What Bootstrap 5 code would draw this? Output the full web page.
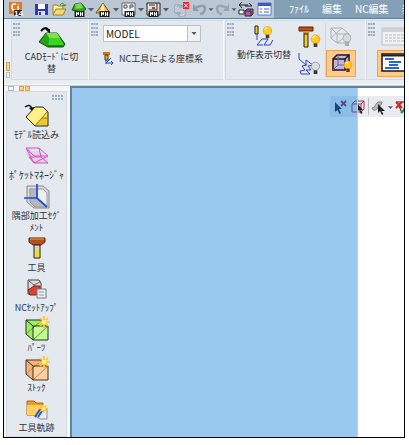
<!DOCTYPE html>
<html lang="ja">
<head>
<meta charset="utf-8">
<meta name="viewport" content="width=device-width, initial-scale=1">
<title>CAM</title>
<link href="https://cdn.jsdelivr.net/npm/bootstrap@5.3.0/dist/css/bootstrap.min.css" rel="stylesheet">
<style>
body{font:9px/12px "Noto Sans CJK JP",sans-serif;color:#303238;background:#fff}
.shell{padding:0 4px 7px 3px}
.app{border:1px solid #000;border-top:0;background:#e9eef2}
button{background:none;border:0;padding:0;color:inherit;font:inherit}
svg{display:block;overflow:visible;flex:none}
.titlebar{height:19px;background:#84a0b7;border-bottom:1px solid #5f7f97}
.quick{background:#bbc7d5;padding-left:4px;width:270px;flex:none}
.quick svg{width:15px;height:16px}
.quick .drop svg{width:10px}
.tail .drop svg{width:8px}
.logo{margin-right:11px}
.gap-l{margin-left:3px}
.gap-m{margin-left:4px}
.menus{gap:13px;padding-left:15px;font-size:10px;overflow:hidden;flex:1 1 0;min-width:0}
.menus a{color:#fff;text-decoration:none;white-space:nowrap}
.ribbon{height:66px;padding:1px 0 4px;border-bottom:1px solid #f8fafb}
.tabs-v{width:7px;padding:0 0 2px 2px;flex:none;gap:1px}
.tabs-v i,.tabs-h i{border:1px solid #a9b9c5;background:#fff;width:4px;height:6px}
.tabs-v i.on,.tabs-h i.on{background:#ffcf80;border-color:#cfa260}
.tabs-v i.on{height:9px}
.group{background:#e3e9ef;border:1px solid #d3dae1;border-right-color:#f9fafb;padding:2px 1px;flex:none}
.g-mode{width:78px}.g-coord{width:135px;margin-right:1px}.g-view{width:141px}.g-list{width:60px}
.dots{width:7px;height:14px;flex:none}
.mode-btn{padding:1px 4px 0 0}
.coord{padding:2px 0 0 5px;gap:10px}
.combo{width:98px;height:17px}
.combo select{appearance:none;width:100%;height:100%;font-size:10px;line-height:15px;border:1px solid #b8c0c8;border-radius:0;background:#fff;padding:0 2px;color:#222}
.combo svg{position:absolute;right:0;top:0;pointer-events:none}
.coord-btn{gap:5px;white-space:nowrap}
.switch{width:56px;padding-top:3px;gap:2px;white-space:nowrap}
.next{margin-left:2px}
.tile{width:30px;height:29px}
.tile.active{background:#ffcb8b;border:1px solid #e9a55c}
.col-sep{border-left:1px solid #cbd3db;margin-left:1px}
.work{border-top:1px solid #c7d0d8}
.side{width:66px;flex:none;background:#f4f6f8}
.tabs-h{gap:1px;padding-left:4px}
.tabs-h i{width:6px;height:5px}.tabs-h i.on{width:5px}
.panel{background:#e3e9ef;border:1px solid #d2dae1;margin:0 3px 0 2px;padding-top:3px}
.dots-h{margin:0 2px 4px auto}
.tools{gap:3px}
.tools button{width:100%;white-space:nowrap}
.tools svg{margin:0 auto;width:26px;height:25px}
.small-label{font-size:10px;margin:0 -2px}
.canvas{background:#fff;border-left:2px solid #648399;border-top:2px solid #648399;padding-top:8px}
.float-bar{background:#e8ecf0;width:74px;height:21px;border-radius:3px 0 0 3px;padding-left:3px;gap:3px;overflow:hidden}
.float-bar .rule{border-left:1px solid #b8bcc2;height:17px}
.selection{inset:0 46px 0 0;background:rgba(0,120,215,.4);border-right:1px solid #b0d4f2;pointer-events:none}
</style>
<script src="https://cdn.jsdelivr.net/npm/bootstrap@5.3.0/dist/js/bootstrap.bundle.min.js"></script>
</head>
<body>
<svg width="0" height="0" class="position-absolute" aria-hidden="true">
<defs>
<symbol id="caret" viewBox="0 0 10 16"><path d="M2 7h6L5 10.500z" fill="#555d68"/></symbol>
<symbol id="grip" viewBox="0 0 7 14"><path d="M0 1h7M0 5h7M0 9h7M0 12h7" stroke="#9aafc2" stroke-width="2" stroke-dasharray="2 .5"/></symbol>
<symbol id="bulb" viewBox="0 0 12 16"><circle cx="6" cy="5.500" r="4.700" fill="#ffc928" stroke="#ef9f12"/><path d="M3 4q1-2 3-2" stroke="#fff6ad" stroke-width="1.500" fill="none"/><path d="M4 10h4v4H4z" fill="#4a3a2a"/></symbol>
<symbol id="bulboff" viewBox="0 0 12 16"><circle cx="6" cy="5.500" r="4.500" fill="#dcdddd" stroke="#96999b"/><path d="M4 10h4v4H4z" fill="#333"/></symbol>
<symbol id="star" viewBox="0 0 12 12"><path d="M6 0v12M0 6h12M2 2l8 8M10 2l-8 8" stroke="#ffc42e" stroke-width="1.700"/><circle cx="6" cy="6" r="2.200" fill="#fff3a0"/></symbol>
<symbol id="nc" viewBox="0 0 10 6"><path d="M0 0h10v6H0z" fill="#222"/><path d="M2 5V1l2 3V1M6 5V1M8 1v4M6 3h2" stroke="#fff" fill="none"/></symbol>
</defs>
</svg>
<div class="shell vh-100">
<div class="app h-100 d-flex flex-column overflow-hidden">
<header class="titlebar d-flex">
<div class="quick d-flex align-items-center">
<span class="logo"><svg viewBox="0 0 15 16"><path d="M1 1h13v12H1z" fill="#e87722"/><path d="M8 3Q4 2 4 6q0 4 4 3M10 5v4M10 3v1" stroke="#fff" stroke-width="1.600" fill="none"/><path d="M6 9h8v6H6z" fill="#351d14"/><text x="6" y="15" font-size="8" font-weight="700" fill="#fff" font-family="Liberation Sans,sans-serif">14</text></svg></span>
<button aria-label="保存"><svg viewBox="0 0 15 16"><path d="M1 3h13v11H1z" fill="#3038bd"/><path d="M4 3h7v5H4z" fill="#fff"/><path d="M4 10h7v4H4z" fill="#dfe4f5"/><path d="M5 11h2v3H5z" fill="#333a9a"/></svg></button>
<button class="gap-l" aria-label="開く"><svg viewBox="0 0 15 16"><path d="M1 13V4h4l1 1h5v3" fill="#fff0a0" stroke="#99802e"/><path d="M1 14L4 8h10l-3 6z" fill="#f5d873" stroke="#99802e"/><path d="M8 4q3-4 5 1l1-2m-1 2l-3-1" stroke="#3a9c3a" fill="none"/></svg></button>
<button class="gap-m" aria-label="モデル"><svg viewBox="0 0 15 16"><path d="M1 9l3-6 6-1 5 6-4 3z" fill="#37a722" stroke="#1d5412"/><path d="M4 3l6-1 2 5-7 1z" fill="#78d956"/><use href="#nc" x="3" y="10" width="11" height="6"/></svg></button><button class="drop" aria-label="モデルの一覧"><svg><use href="#caret"/></svg></button>
<button aria-label="ワーク"><svg viewBox="0 0 15 16"><path d="M7 2l7 10H0z" fill="#f6b53c" stroke="#765117"/><path d="M7 2l2 9H4z" fill="#fff6c8"/><use href="#nc" x="3" y="10" width="11" height="6"/></svg></button><button class="drop" aria-label="ワークの一覧"><svg><use href="#caret"/></svg></button>
<button aria-label="ポスト"><svg viewBox="0 0 15 16"><path d="M1 2h13v12H1z" fill="#f4f5f6" stroke="#666"/><path d="M3 4h3v3H3zM9 8V4h3v2H9" fill="none" stroke="#555"/><use href="#nc" x="3" y="10" width="11" height="6"/></svg></button><button class="drop" aria-label="ポストの一覧"><svg><use href="#caret"/></svg></button>
<button aria-label="機械"><svg viewBox="0 0 15 16"><path d="M1 2h13v12H1z" fill="#e4e2df" stroke="#222"/><path d="M11 2v7H3M3 4h6" fill="none" stroke="#333"/><path d="M6 6h3v2H6z" fill="#c8342c"/><use href="#nc" x="2" y="10" width="11" height="6"/></svg></button><button class="drop" aria-label="機械の一覧"><svg><use href="#caret"/></svg></button>
<button class="gap-l" aria-label="削除"><svg viewBox="0 0 15 16"><path d="M1 4h6v8H1zM3 5h6v8H3zM5 6h6v9H5z" fill="#f5f7fa" stroke="#8b9cb1"/><path d="M9 1h6v7H9z" fill="#e7252d"/><path d="M10 2.500l4 4m0-4l-4 4" stroke="#fff"/></svg></button>
<div class="tail d-flex gap-l"><button aria-label="元に戻す"><svg viewBox="0 0 15 16"><path d="M3 7q10-5 10 1 0 4-5 5" fill="none" stroke="#909dac" stroke-width="2.500"/><path d="M1 3v7h6z" fill="#909dac"/></svg></button><button class="drop" aria-label="元に戻す履歴"><svg><use href="#caret" width="8" height="16"/></svg></button><button aria-label="やり直し"><svg viewBox="0 0 15 16"><path d="M12 7Q2 2 2 8q0 4 5 5" fill="none" stroke="#98a5b3" stroke-width="2.500"/><path d="M14 3v7H8z" fill="#98a5b3"/></svg></button><button class="drop" aria-label="やり直し履歴"><svg><use href="#caret" width="8" height="16"/></svg></button>
<button aria-label="切替"><svg viewBox="0 0 15 16"><path d="M1 4h9M4 1L1 4l3 3M14 5H7m4-3l3 3" stroke="#181818" fill="none"/><path d="M1 9h5v4H1z" fill="#fff" stroke="#222"/><path d="M7 10l2-2h6v5l-2 2H7z" fill="#a8609e" stroke="#38203a"/><path d="M7 10h6v5" stroke="#38203a" fill="none"/></svg></button>
<button class="gap-m" aria-label="一覧"><svg viewBox="0 0 15 16"><path d="M1 2h13v12H1z" fill="#fff" stroke="#5678ca"/><path d="M1 2h13v3H1z" fill="#365dcb"/><path d="M3 8h2m2 0h5M3 11h2m2 0h5" stroke="#4261bd"/></svg></button></div>
</div>
<nav class="menus d-flex align-items-center"><a href="#">ﾌｧｲﾙ</a><a href="#">編集</a><a href="#">NC編集</a><a href="#">表</a></nav>
</header>
<div class="ribbon d-flex flex-shrink-0">
<div class="tabs-v d-flex flex-column justify-content-end"><i class="on"></i><i></i></div>
<section class="group g-mode d-flex"><svg class="dots"><use href="#grip"/></svg>
<button class="mode-btn flex-fill"><svg class="mx-auto mb-1" width="26" height="21" viewBox="0 0 26 21"><path d="M2 5q5-6 8 0" fill="none" stroke="#111" stroke-width="2"/><path d="M6 3h5v5z" fill="#111"/><path d="M0 16L7 7h11l8 11-2 3H9z" fill="#168c0b" stroke="#154b0d"/><path d="M7 7h11l3 5H10z" fill="#83e04b"/><path d="M10 12h11l4 7H9z" fill="#3bd422"/><path d="M1 16l6-9 3 5-1 8z" fill="#25a516"/></svg>CADﾓｰﾄﾞに切<br>替</button></section>
<section class="group g-coord d-flex"><svg class="dots"><use href="#grip"/></svg>
<div class="coord d-flex flex-column">
<div class="combo position-relative"><select aria-label="座標系"><option>MODEL</option></select><svg width="14" height="17"><path d="M.5.500h13v16H.500z" fill="#eef1f3" stroke="#b8c0c8"/><path d="M4.500 7h5L7 10z" fill="#555"/></svg></div>
<button class="coord-btn d-flex align-items-center"><svg width="11" height="13" viewBox="0 0 11 13"><path d="M0 0h7v3H0z" fill="#c9781b"/><path d="M2 3h3v5H2z" fill="#e4bc2b" stroke="#333"/><path d="M3 12V8m0 3h7M3 11l5-5M8 9l2 2-2 2" stroke="#2549bc" fill="none"/></svg>NC工具による座標系</button></div></section>
<section class="group g-view d-flex"><svg class="dots"><use href="#grip"/></svg>
<button class="switch next d-flex flex-column align-items-center"><svg width="20" height="21" viewBox="0 0 20 21"><path d="M1 0h3v8H1z" fill="#ecd326" stroke="#222"/><path d="M3 8v6M3 19l5-6h6l-4 6h6l3-5M3 19h6" stroke="#3040ca" fill="none"/><use href="#bulb" x="8" y="0" width="11" height="14"/></svg><span>動作表示切替</span></button>
<div class="next d-flex flex-column"><button class="tile" aria-label="工具表示"><svg width="24" height="24" viewBox="0 0 24 24" class="ms-1"><path d="M1 2h14v4H1z" fill="#b55312" stroke="#5c2507"/><path d="M5 6h6v3H5z" fill="#e58a30"/><path d="M6 9h4v13H6z" fill="#e8cf23" stroke="#222"/><use href="#bulb" x="12" y="9" width="11" height="15"/></svg></button>
<button class="tile" aria-label="軌跡表示"><svg width="24" height="24" viewBox="0 0 24 24" class="ms-1"><path d="M1 1v6l7 6V8l7 5-5 1 3 4H8l4 4H3l-1-3 5-1-3-4 5-1" stroke="#3040d0" fill="none"/><use href="#bulboff" x="12" y="9" width="11" height="15"/></svg></button></div>
<div class="col-sep d-flex flex-column"><button class="tile" aria-label="形状表示"><svg width="24" height="24" viewBox="0 0 24 24" class="ms-1"><path d="M1 4h11l7 6v9H7l-6-5zM1 4l6 6h12M7 10v9M1 14L12 4M7 19l12-9" fill="none" stroke="#aeb2b6"/><circle cx="17" cy="14" r="4" fill="#d8dbde" stroke="#b3b7ba"/><path d="M15 18h4v4h-4z" fill="#a9adaf"/></svg></button>
<button class="tile active" aria-label="ソリッド表示"><svg width="22" height="22" viewBox="0 0 22 22" class="ms-1"><path d="M2 7l4-4h12v11l-4 4H2z" fill="#cdb6dc" stroke="#171520" stroke-width="1.500"/><path d="M2 7h12v11M14 7l4-4" fill="none" stroke="#171520" stroke-width="1.500"/><path d="M3 8h10v9H3z" fill="#c3b2e0"/><path d="M2 18l5-5V3m0 10h9" stroke="#6d6590" fill="none"/><use href="#bulb" x="12" y="8" width="10" height="14"/></svg></button></div></section>
<section class="group g-list d-flex"><svg class="dots"><use href="#grip"/></svg>
<div class="next d-flex flex-column"><button class="tile" aria-label="表"><svg width="26" height="25" viewBox="0 0 26 25" class="ms-1"><path d="M1 4h25v17H1z" fill="#f0f1f3" stroke="#bdc1c6"/><path d="M1 4h25v4H1z" fill="#cfd2d5"/><path d="M4 11h20M4 14h20M4 17h20" stroke="#b9bdc1" stroke-dasharray="3 1"/></svg></button>
<button class="tile active" aria-label="ツリー"><svg width="26" height="22" viewBox="0 0 26 22" class="ms-1"><path d="M0 2h25v17H0z" fill="#fff" stroke="#191919" stroke-width="1.500"/><path d="M0 3.500h25" stroke="#222" stroke-width="2"/><path d="M3 7h9M7 10h12M7 13h9M3 16h14" stroke="#2864dc" stroke-width="2"/></svg></button></div></section>
</div>
<main class="work d-flex flex-fill">
<aside class="side d-flex flex-column"><div class="tabs-h d-flex"><i></i><i class="on ms-1"></i><i class="on"></i></div>
<div class="panel flex-fill"><svg class="dots-h" width="12" height="5"><path d="M0 1h12M0 4h12" stroke="#9aafc2" stroke-width="2" stroke-dasharray="2 1"/></svg>
<div class="tools d-flex flex-column">
<button><svg viewBox="0 0 26 25"><path d="M1 3q5-4 7 2" fill="none" stroke="#111" stroke-width="1.500"/><path d="M5 4l5-1-1 5z" fill="#111"/><path d="M2 13l9-10h8l5 5v14H11z" fill="#ffe04b" stroke="#272416"/><path d="M12 4h7l4 4-6 6-7 6-7-7z" fill="#fff08a"/><path d="M11 21l7-7h5v7z" fill="#eec832"/><path d="M11 22l7-8h6M18 14l5-6" stroke="#8a7a28" fill="none"/></svg>ﾓﾃﾞﾙ読込み</button>
<button><svg viewBox="0 0 26 25"><path d="M2 7h13l9 8v4H11l-9-8z" fill="#d9d9dc"/><path d="M2 4h13l9 8H10zM5 13h12l7 6H10zM2 4l8 15M15 4l2 9M24 12l-14 7" fill="none" stroke="#e545d1"/></svg><span class="small-label">ﾎﾟｹｯﾄﾏﾈｰｼﾞｬ</span></button>
<button><svg viewBox="0 0 26 25"><path d="M3 1h16l6 5v17H10l-7-6z" fill="#d8dadc" stroke="#888"/><path d="M6 4h7v10l10 8H11l-5-5z" fill="#b5b9bd" stroke="#999"/><path d="M13 4h6l4 4v13l-10-7z" fill="#eceeef" stroke="#999"/><path d="M13-1v14M0 13h13l10 9" fill="none" stroke="#2149df" stroke-width="1.700"/></svg>隅部加工ｾｸﾞ<br>ﾒﾝﾄ</button>
<button><svg viewBox="0 0 26 25"><path d="M5 1h16v4l-4 3H9L5 5z" fill="#b75117" stroke="#5a250a"/><path d="M6 2h14" stroke="#ee9f57"/><path d="M10 8h6v13h-6z" fill="#d7d3d0" stroke="#222"/><path d="M11 13h4v7h-4z" fill="#eadf21"/></svg>工具</button>
<button><svg viewBox="0 0 26 25"><path d="M4 3h11l2 3v7l-5 4H4z" fill="#ddd" stroke="#444"/><path d="M5 4l5 4 6-3M10 8v6" stroke="#666" fill="none"/><path d="M4 13l6-4h6v6l-4 3H6z" fill="#d94238" stroke="#811e1b"/><path d="M13 12h9v9h-9z" fill="#eef0f2" stroke="#707b86"/><path d="M15 15h5m-5 3h5" stroke="#899"/></svg>NCｾｯﾄｱｯﾌﾟ</button>
<button><svg viewBox="0 0 26 25"><path d="M2 3h16l6 6v14H9l-7-6z" fill="#9eec60"/><path d="M9 9h15v14H9z" fill="#c4fb94"/><path d="M2 17L18 3M9 23L24 9" stroke="#5f9a3c" fill="none"/><path d="M2 3h16l6 6v14H9l-7-6zM2 3l7 6h15M9 9v14" stroke="#22331a" fill="none"/><use href="#star" x="14" y="-1" width="12" height="12"/></svg>ﾊﾟｰﾂ</button>
<button><svg viewBox="0 0 26 25"><path d="M2 3h16l6 6v14H9l-7-6z" fill="#f3b478"/><path d="M9 9h15v14H9z" fill="#ffd0a0"/><path d="M2 17L18 3M9 23L24 9" stroke="#b98756" fill="none"/><path d="M2 3h16l6 6v14H9l-7-6zM2 3l7 6h15M9 9v14" stroke="#49351f" fill="none"/><use href="#star" x="14" y="-1" width="12" height="12"/></svg>ｽﾄｯｸ</button>
<button><svg viewBox="0 0 26 25"><path d="M3 4h7l2 2h7v12H3z" fill="#ec9d21" stroke="#a66a12"/><path d="M3 8h16v10H3z" fill="#ffcf62"/><path d="M11 19l6-8 6 1v10h-7z" fill="#e9ecf2" stroke="#8c94a2"/><path d="M11 20l6-9M14 20l6-9" stroke="#2e55cb" stroke-width="2"/><use href="#star" x="15" y="7" width="9" height="9"/></svg>工具軌跡</button>
</div></div></aside>
<section class="canvas flex-fill position-relative">
<div class="float-bar d-flex align-items-center ms-auto">
<button aria-label="選択解除"><svg width="15" height="17" viewBox="0 0 15 17"><path d="M2 4v10l2.500-2 2 4 1.500-1-2-4h3z" fill="#222b38"/><path d="M8 3l5 5m0-5L8 8" stroke="#b31945" stroke-width="1.800"/></svg></button>
<button aria-label="形状選択"><svg width="14" height="17" viewBox="0 0 14 17"><path d="M1 6l3-3h9v8l-3 3H1zM1 6h9v8M10 6l3-3" fill="none" stroke="#a93545"/><path d="M6 5v9l2-2 2 4 1.500-1-2-3H12z" fill="#222"/></svg></button>
<span class="rule"></span>
<button aria-label="曲面選択"><svg width="13" height="17" viewBox="0 0 13 17"><path d="M0 10q3 0 4-4 1-3 6-2l-1 3q-3 0-3 3-2 3-5 2z" fill="#bbb" stroke="#888"/><path d="M6 6v9l2-2 2 4 1.500-1-2-3H13z" fill="#222"/></svg></button>
<button aria-label="曲面選択の一覧"><svg width="5" height="16" viewBox="2 0 6 16"><use href="#caret" width="10" height="16"/></svg></button>
<button aria-label="編集取消"><svg width="10" height="17" viewBox="0 0 10 17"><path d="M0 4h10M3 8l3 7 4-9" stroke="#222" fill="none"/><path d="M0 4l6 6m0-6l-6 6" stroke="#e21c20" stroke-width="2"/><path d="M5 15l5-5" stroke="#269036" stroke-width="2"/></svg></button>
</div>
<div class="selection position-absolute"></div>
</section>
</main>
</div>
</div>
</body>
</html>
